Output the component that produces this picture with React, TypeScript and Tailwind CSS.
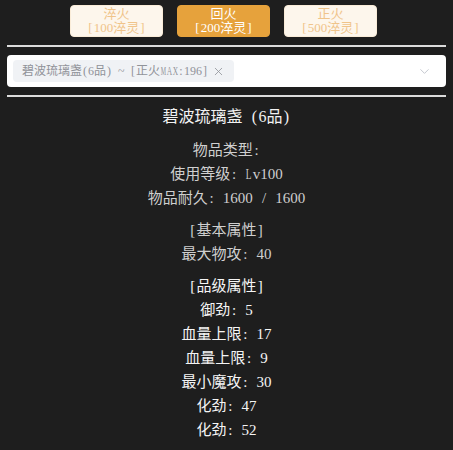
import { ChevronDown, X } from "lucide-react";

const FONT = {
  fontFamily: '"Liberation Serif", "Noto Sans CJK SC", serif',
};

// The screenshot uses a SimSun-like font: ASCII takes half a cell, CJK a full one.
function Mono({ text }: { text: string }) {
  return (
    <>
      {Array.from(text).map((ch, i) => {
        if (ch.charCodeAt(0) >= 256) {
          return (
            <span key={i} className="inline-block w-[1em] text-center">
              {ch}
            </span>
          );
        }
        // wide capitals get squeezed so they fit the half cell
        if (/[MW]/.test(ch)) {
          return (
            <span key={i} className="inline-flex w-[0.5em] justify-center">
              <span className="inline-block scale-x-[0.5]">{ch}</span>
            </span>
          );
        }
        if (/[A-Z]/.test(ch)) {
          return (
            <span key={i} className="inline-flex w-[0.5em] justify-center">
              <span className="inline-block scale-x-[0.62]">{ch}</span>
            </span>
          );
        }
        return (
          <span key={i} className="inline-block w-[0.5em] text-center">
            {ch === " " ? "\u00a0" : ch}
          </span>
        );
      })}
    </>
  );
}

const levels = [
  { name: "淬火", cost: "[100淬灵]", active: false },
  { name: "回火", cost: "[200淬灵]", active: true },
  { name: "正火", cost: "[500淬灵]", active: false },
];

const groups: { lines: string[]; bright?: boolean }[] = [
  { lines: ["物品类型:", "使用等级: Lv100", "物品耐久: 1600 / 1600"] },
  { lines: ["[基本属性]", "最大物攻: 40"] },
  {
    lines: [
      "[品级属性]",
      "御劲: 5",
      "血量上限: 17",
      "血量上限: 9",
      "最小魔攻: 30",
      "化劲: 47",
      "化劲: 52",
    ],
    bright: true,
  },
];

export default function App() {
  return (
    <div className="min-h-[450px] w-full bg-[#1e1e1e] pt-[5px]" style={FONT}>
      <div className="flex justify-center gap-[14px] pr-[6px]">
        {levels.map((l) => (
          <button
            key={l.name}
            className={
              l.active
                ? "flex h-[32px] w-[93px] flex-col items-center justify-center rounded-[4px] border border-[#e6a23c] bg-[#e6a23c] text-[13px] leading-[14px] text-white"
                : "flex h-[32px] w-[93px] flex-col items-center justify-center rounded-[4px] border border-[#faecd8] bg-[#fdf6ec] text-[13px] leading-[14px] text-[#f0c48a]"
            }
          >
            <span>
              <Mono text={l.name} />
            </span>
            <span>
              <Mono text={l.cost} />
            </span>
          </button>
        ))}
      </div>

      <div className="mx-[7px] mt-[8px] h-[2px] bg-[#dcdcdc]" />

      <div className="mx-[7px] mt-[8px] flex h-[32px] items-center rounded-[4px] bg-white pl-[6px] pr-[14px]">
        <span className="flex h-[22px] items-center gap-[4px] rounded-[4px] bg-[#f0f2f5] px-[9px] text-[12px] text-[#909399]">
          <span className="whitespace-nowrap">
            <Mono text="碧波琉璃盏(6品) ~ [正火MAX:196]" />
          </span>
          <X className="size-[13px]" strokeWidth={1.5} />
        </span>
        <ChevronDown className="ml-auto size-[15px] text-[#c0c4cc]" strokeWidth={1.5} />
      </div>

      <div className="mx-[7px] mt-[8px] h-[2px] bg-[#dcdcdc]" />

      <div className="mt-[8px] text-center text-[16px] leading-[24px] text-[#f2f2f2]">
        <Mono text="碧波琉璃盏 (6品)" />
      </div>

      <div className="mt-[9px] flex flex-col gap-[8px] text-center text-[15px] leading-[24px]">
        {groups.map((g, i) => (
          <div key={i} className={g.bright ? "text-[#f5f5f5]" : "text-[#cfcfcf]"}>
            {g.lines.map((line, j) => (
              <div key={j}>
                <Mono text={line} />
              </div>
            ))}
          </div>
        ))}
      </div>
    </div>
  );
}
